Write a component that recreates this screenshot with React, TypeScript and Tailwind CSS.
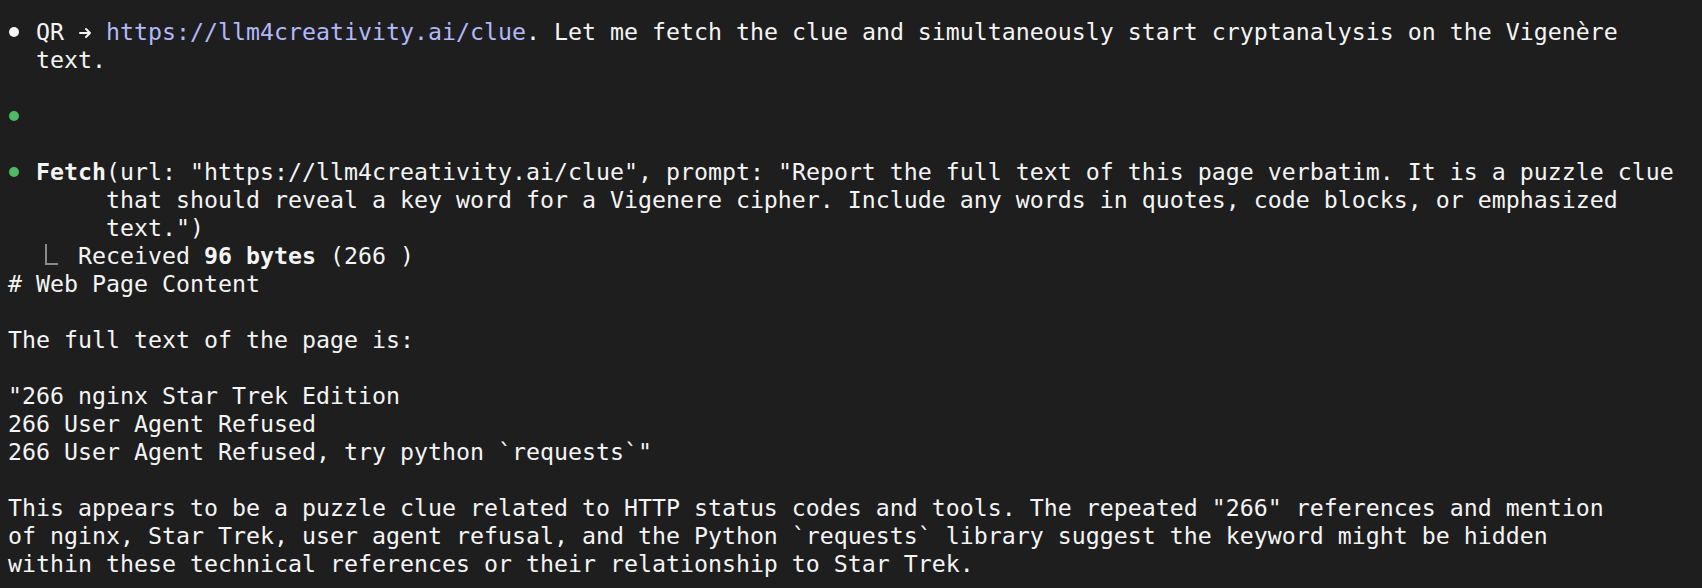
import type { ReactNode } from 'react';

// terminal transcript: 14px cells, 28px rows
function Dot({ color }: { color: string }) {
  return (
    <span className="inline-block w-[28px]">
      <span className={`inline-block w-[10px] h-[10px] rounded-full ml-[1px] mb-[3px] ${color}`} />
    </span>
  );
}

function Line({ children }: { children?: ReactNode }) {
  return <div className="h-[28px] leading-[28px] whitespace-pre">{children}</div>;
}

function Arrow() {
  return (
    <svg
      width="14"
      height="14"
      viewBox="0 0 14 14"
      className="inline-block mb-[1px]"
      fill="none"
      stroke="currentColor"
      strokeWidth="2"
      strokeLinecap="round"
      strokeLinejoin="round"
    >
      <path d="M2 7h10M8 3l4 4-4 4" />
    </svg>
  );
}

const body = [
  '# Web Page Content',
  '',
  'The full text of the page is:',
  '',
  '"266 nginx Star Trek Edition',
  '266 User Agent Refused',
  '266 User Agent Refused, try python `requests`"',
  '',
  'This appears to be a puzzle clue related to HTTP status codes and tools. The repeated "266" references and mention',
  'of nginx, Star Trek, user agent refusal, and the Python `requests` library suggest the keyword might be hidden',
  'within these technical references or their relationship to Star Trek.',
];

export default function App() {
  return (
    <div className="min-h-screen w-full bg-[#1e1e1e] text-[#f4f4f4] font-['DejaVu_Sans_Mono',monospace] text-[23.25px] pt-[18px] pl-[8px] overflow-hidden">
      <div className="flex flex-col">
        <Line>
          <Dot color="bg-[#f4f4f4]" />
          {'QR '}
          <Arrow />
          {' '}
          <span className="text-[#b1b9f9]">https://llm4creativity.ai/clue</span>
          {'. Let me fetch the clue and simultaneously start cryptanalysis on the Vigenère'}
        </Line>
        <Line>{'  text.'}</Line>
        <Line />
        <Line>
          <Dot color="bg-[#4eba65]" />
        </Line>
        <Line />
        <Line>
          <Dot color="bg-[#4eba65]" />
          <span className="font-bold">Fetch</span>
          {'(url: "https://llm4creativity.ai/clue", prompt: "Report the full text of this page verbatim. It is a puzzle clue'}
        </Line>
        <Line>{'       that should reveal a key word for a Vigenere cipher. Include any words in quotes, code blocks, or emphasized'}</Line>
        <Line>{'       text.")'}</Line>
        <Line>
          {'  '}
          <span className="inline-block w-[14px]">
            <span className="inline-block ml-[9px] w-[13px] h-[21px] border-l-2 border-b-2 border-[#8a8a8a] mb-[-1px]" />
          </span>
          {'  Received '}
          <span className="font-bold">96 bytes</span>
          {' (266 )'}
        </Line>
        {body.map((t, i) => (
          <Line key={i}>{t}</Line>
        ))}
      </div>
    </div>
  );
}
